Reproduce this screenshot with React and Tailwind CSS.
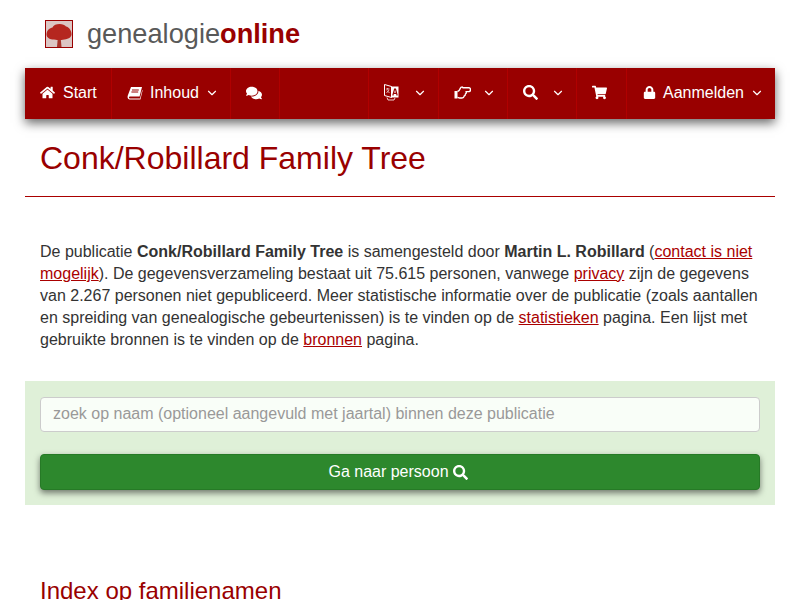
import React from "react";
import { FaHome, FaComments, FaSearch, FaShoppingCart, FaLock } from "react-icons/fa";
import { LuChevronDown } from "react-icons/lu";

const Chev = () => <LuChevronDown className="w-[14px] h-[14px] text-white" strokeWidth={2} />;

const BookIcon = () => (
  <svg viewBox="0 0 16 14" className="w-[16px] h-[14px]" fill="none">
    <path d="M4 1 H15 L12.6 10.5 H3 C1.6 10.5 1.6 12.6 3 12.6 H13 L15.2 4 L15.6 4.4 L13.4 13.4 H2.6 C0.6 13.4 0.2 11.4 0.8 9.6 Z" fill="white" />
    <path d="M5 4 H11.8 M4.4 6 H11.2" stroke="#990000" strokeWidth="1" />
  </svg>
);

const LangIcon = () => (
  <svg viewBox="0 0 15 17" className="w-[15px] h-[17px]" fill="none">
    <path d="M7.5 2.5 L0.5 0.5 V11.5 L7.5 13.5 Z" stroke="white" strokeWidth="1" />
    <path d="M7 2.5 H14.5 V13.5 H7 Z" fill="white" />
    <path d="M8.8 11.5 L10.6 5 H11.5 L13.2 11.5 M9.6 9.4 H12.4" stroke="#990000" strokeWidth="1.2" />
    <path d="M2 5 H5.5 M3.7 4 V5.5 M2.5 9 L5 6 M3 6.5 L5.5 9" stroke="white" strokeWidth="0.7" />
    <path d="M3 13.5 L4 16 H10 L11 14" stroke="white" strokeWidth="0.8" />
  </svg>
);

const HandIcon = () => (
  <svg viewBox="0 0 17 13" className="w-[17px] h-[13px]" fill="none">
    <path d="M0.5 5 H3.5 V12.5 H0.5 Z" fill="white" />
    <path d="M3.5 5.5 C5 5 6 3.5 6.5 2 C7 0.8 8.5 0.8 9 1.8 L15 1.8 C17 2 17 5.4 15 5.6 L12.2 5.6 C12.5 6.6 12 7.6 11.4 8 C11.4 9 10.8 9.8 10.2 10 C10 11.2 9.2 12 8 12 H5.5 C4.6 12 4.2 11.4 3.5 11.4" stroke="white" strokeWidth="1.4" />
  </svg>
);

export default function App() {
  return (
    <div className="w-[800px] h-[600px] overflow-hidden bg-white text-[16px] leading-[22px] text-[#333333] font-['Liberation_Sans',Arial,sans-serif]">
      <div className="px-[25px]">
        <div className="h-[68px] flex items-center pl-[20px]">
          <div className="w-[28px] h-[28px] border border-[#990000] bg-[#dcc6c4] flex items-center justify-center shrink-0">
            <svg viewBox="0 0 26 26" className="w-[26px] h-[26px]">
              <path d="M11 26 L11.8 17 L14.7 17 L15.5 26 Z" fill="#a8342a" />
              <path d="M0.5 14 C0.5 9 4 7 6.5 6.5 C8 2 18 2 20 5.5 C23 6 26 10 25.5 14 C24.5 18 19 18.5 15.5 19 L11 19 C8 18.5 1.5 19 0.5 14 Z" fill="#b5261f" />
            </svg>
          </div>
          <div className="ml-[14px] text-[27.2px] leading-[32px] text-[#595959]">genealogie<span className="font-bold text-[#990000]">online</span></div>
        </div>

        <nav className="h-[51px] bg-[#990000] flex justify-between shadow-[0_4px_10px_rgba(0,0,0,0.6)]">
          <div className="flex h-full">
            <div className="w-[87px] h-full border-r border-[#b00000] flex items-center pl-[15px] gap-[8px] text-white pb-[2px]">
              <FaHome className="w-[15px] h-[15px]" /><span>Start</span>
            </div>
            <div className="w-[119px] h-full border-r border-[#b00000] flex items-center pl-[15px] text-white pb-[2px]">
              <BookIcon /><span className="ml-[7px]">Inhoud</span><span className="ml-[6px]"><Chev /></span>
            </div>
            <div className="w-[49px] h-full border-r border-[#b00000] flex items-center pl-[15px] text-white pb-[2px]">
              <FaComments className="w-[16px] h-[16px]" />
            </div>
          </div>
          <div className="flex h-full">
            <div className="w-[70px] h-full border-l border-[#b00000] flex items-center pl-[15px] text-white pb-[2px]">
              <LangIcon /><span className="ml-[14px]"><Chev /></span>
            </div>
            <div className="w-[69px] h-full border-l border-[#b00000] flex items-center pl-[15px] text-white pb-[2px]">
              <HandIcon /><span className="ml-[11px]"><Chev /></span>
            </div>
            <div className="w-[69px] h-full border-l border-[#b00000] flex items-center pl-[15px] text-white pb-[2px]">
              <FaSearch className="w-[15px] h-[15px]" /><span className="ml-[13px]"><Chev /></span>
            </div>
            <div className="w-[50px] h-full border-l border-[#b00000] flex items-center pl-[15px] text-white pb-[2px]">
              <FaShoppingCart className="w-[15px] h-[15px]" />
            </div>
            <div className="w-[149px] h-full border-l border-[#b00000] flex items-center pl-[16px] text-white pb-[2px]">
              <FaLock className="w-[13px] h-[13px]" /><span className="ml-[7px]">Aanmelden</span><span className="ml-[6px]"><Chev /></span>
            </div>
          </div>
        </nav>

        <div className="h-[78px] border-b border-[#aa0000] px-[15px] pt-[21px]">
          <h1 className="text-[32px] leading-[36px] text-[#990000]">Conk/Robillard Family Tree</h1>
        </div>

        <p className="px-[15px] mt-[44px]">
          De publicatie <b>Conk/Robillard Family Tree</b> is samengesteld door <b>Martin L. Robillard</b> (<a className="text-[#aa0000] underline">contact is niet mogelijk</a>). De gegevensverzameling bestaat uit 75.615 personen, vanwege <a className="text-[#aa0000] underline">privacy</a> zijn de gegevens van 2.267 personen niet gepubliceerd. Meer statistische informatie over de publicatie (zoals aantallen en spreiding van genealogische gebeurtenissen) is te vinden op de <a className="text-[#aa0000] underline">statistieken</a> pagina. Een lijst met gebruikte bronnen is te vinden op de <a className="text-[#aa0000] underline">bronnen</a> pagina.
        </p>

        <div className="mt-[30px] h-[124px] bg-[#dff0d8] px-[15px] pt-[16px]">
          <div className="h-[35px] rounded-[4px] border border-[#cccccc] bg-[#f9fef8] flex items-center px-[12px] pb-[2px] text-[#999999]">
            zoek op naam (optioneel aangevuld met jaartal) binnen deze publicatie
          </div>
          <div className="mt-[22px] h-[36px] rounded-[4px] bg-[#2d882d] border border-[#267a26] shadow-[0_3px_6px_rgba(0,0,0,0.5)] flex items-center justify-center text-white gap-[4px] pr-[4px]">
            Ga naar persoon <FaSearch className="w-[15px] h-[15px]" />
          </div>
        </div>

        <h2 className="mt-[73px] px-[15px] text-[24px] leading-[26px] text-[#990000]">Index op familienamen</h2>
      </div>
    </div>
  );
}
